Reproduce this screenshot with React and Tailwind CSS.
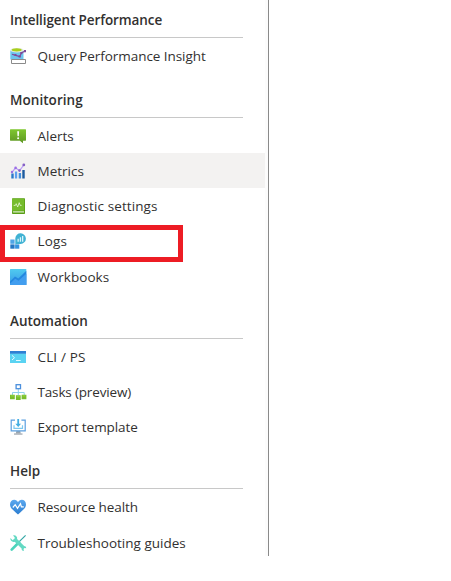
import React from "react";

const Svg = ({ children }) => (
  <svg className="block h-4 w-4 shrink-0 overflow-visible" viewBox="0 0 16 16" fill="none">
    {children}
  </svg>
);

const QueryIcon = () => (
  <Svg>
    <path d="M.3 2.500v9h13.200v-9z" fill="#6cc5ee" />
    <ellipse cx="7" cy="2.200" rx="6.700" ry="2.300" fill="#e3ecdf" />
    <ellipse cx="6.700" cy="1.800" rx="5" ry="1.600" fill="#a9cf1c" />
    <path d="M2 6.200l3.700 1.200 4 1.100 1.800-3.500 3.500-2" stroke="#804998" strokeWidth="1.200" />
    <path d="M4.500 6h2v2h-2zM8.600 7.500h2.200v2H8.600zM10.300 4h2v2h-2zM14 2h2v2.200h-2z" fill="#804998" />
    <path d="M1.500 11.500h14v4h-14z" fill="#fff" stroke="#8b8b8b" />
  </Svg>
);

const AlertsIcon = () => (
  <Svg>
    <defs>
      <linearGradient id="alert" x1="0" y1="0" x2="0" y2="1">
        <stop stopColor="#7fc72f" />
        <stop offset="1" stopColor="#5e9624" />
      </linearGradient>
    </defs>
    <path d="M.5 1.200h15c.3 0 .5.2.5.5v10.600c0 .3-.2.5-.5.5H13v2.400l-3.200-2.400H.5c-.3 0-.5-.2-.5-.5V1.700c0-.3.2-.5.5-.5z" fill="url(#alert)" />
    <path d="M7.200 3.200h1.900l-.3 5H7.500z" fill="#fff" />
    <circle cx="8.150" cy="10.300" r="1" fill="#fff" />
  </Svg>
);

const MetricsIcon = () => (
  <Svg>
    <path d="M1.300 10.500h2.400v5H1.300z" fill="#2a78c9" />
    <path d="M4.900 8.500h2.300v7H4.900z" fill="#5ea0ef" />
    <path d="M8.700 10h2.400v5.500H8.700z" fill="#438fdc" />
    <path d="M12.300 7h2.400v8.500h-2.400z" fill="#1b5a9f" />
    <path d="M2 9.300l3.500-4.500 4 2.900 4.300-5.700" stroke="#b796f9" strokeWidth="1.100" />
    <circle cx="2" cy="9" r="1.200" fill="#9c6fe4" />
    <circle cx="5.600" cy="4.900" r="1.300" fill="#9c6fe4" />
    <circle cx="9.500" cy="7.600" r="1.300" fill="#8661c5" />
    <circle cx="13.800" cy="1.900" r="1.400" fill="#8661c5" />
  </Svg>
);

const DiagnosticIcon = () => (
  <Svg>
    <rect x="2" y=".2" width="13" height="15.700" rx=".7" fill="#5a9e16" />
    <path d="M2 .8h12.200v11.900H2z" fill="#76bc2d" />
    <path d="M3.400 13.200H14v1.300H3.400c-.9 0-.9-1.300 0-1.300z" fill="#d9eec5" />
    <path d="M3.700 7.400h1.700l.8-1.700L7.700 9l1.500-4.300 1 2.700h1.400" stroke="#e8f7d8" strokeWidth=".8" />
  </Svg>
);

const LogsIcon = () => (
  <Svg>
    <path d="M.3 6.500h4.300v4.300H.3z" fill="#50a5e6" />
    <path d="M.3 11.400h4.300v4.300H.3z" fill="#2476c3" />
    <path d="M5.100 11.400h4.200v4.300H5.100z" fill="#3592df" />
    <path d="M5.300 11.500V5.500a5.300 5.300 0 1 1 5.300 5.400H7.300z" fill="#40b2d3" />
    <path d="M7.500 5.800h1.300v3H7.500zM9.800 4.200h1.300v4.600H9.800zM12 2.900h1.300v5.900H12z" fill="#d8f5fc" />
  </Svg>
);

const WorkbooksIcon = () => (
  <Svg>
    <defs>
      <linearGradient id="book" x1="0" y1="0" x2="0" y2="1">
        <stop stopColor="#50cbf0" />
        <stop offset="1" stopColor="#3799e6" />
      </linearGradient>
    </defs>
    <rect width="16.300" height="16" rx=".5" fill="url(#book)" />
    <path d="M0 12.500l5-5 3.300 2 8-7.800V15.500a.5.5 0 0 1-.5.5H.5a.5.5 0 0 1-.5-.5z" fill="#2588df" />
    <path d="M0 14.700l5.200-4.900 3.300 2 7.800-7V15.500a.5.5 0 0 1-.5.500H.5a.5.5 0 0 1-.5-.5z" fill="#429eef" />
  </Svg>
);

const CliIcon = () => (
  <Svg>
    <path d="M0 4.200h16v9.800H0z" fill="#5ad3f2" />
    <path d="M0 2h16v2.700H0z" fill="#2e80d3" />
    <path d="M2 6.400l2.500 2.300L2 11" stroke="#e6faff" strokeWidth="1" />
    <path d="M6 11.500h4.700" stroke="#e6faff" strokeWidth="1" />
  </Svg>
);

const TasksIcon = () => (
  <Svg>
    <path d="M8.300 5v6M2.500 11V8.500h11.700V11" stroke="#8fd0ec" strokeWidth="1" />
    <rect x="6.100" y=".7" width="4.400" height="4" fill="#fff" stroke="#4a8fdd" strokeWidth="1.300" />
    <path d="M0 10.700h4.800v4.600H0zM5.900 11.300h4.800v4.600H5.900zM11.600 10.700h4.800v4.600h-4.800z" fill="#79bd2d" />
    <path d="M.9 11.200h3v1.400h-3zM6.800 11.800h3v1.400h-3zM12.500 11.200h3v1.400h-3z" fill="#8fd13b" />
  </Svg>
);

const ExportIcon = () => (
  <Svg>
    <path d="M6.400 12h3.800l.6 2.500H5.800z" fill="#9aa6b1" />
    <path d="M4 14.500h8.500v1.100H4z" fill="#929aa3" />
    <path d="M5 1.200H1.200v10.600h14V1.200h-3.800" stroke="#5a9fe0" strokeWidth="1.200" />
    <path d="M7.300.1h1.800v4.700h2L8.200 7.900 5.300 4.800h2z" fill="#43aee3" />
    <path d="M4 6.300v3h8.500v-3" stroke="#7cc8ee" strokeWidth="1.200" />
  </Svg>
);

const HealthIcon = () => (
  <Svg>
    <defs>
      <linearGradient id="heart" x1="0" y1="0" x2="0" y2="1">
        <stop stopColor="#5ba8ef" />
        <stop offset="1" stopColor="#2b7dd0" />
      </linearGradient>
    </defs>
    <path d="M8 15.500C3.700 11.700 0 9 0 5.400 0 2.700 2 .8 4.300.8 6 .8 7.300 1.700 8 3.200 8.700 1.700 10.100.8 11.800.8 14.100.8 16 2.700 16 5.400 16 9 12.300 11.700 8 15.500z" fill="url(#heart)" />
    <path d="M2.800 8.500l2.400-2.800 2.300 3.600 3-4.600.9 3.200h2.400" stroke="#fff" strokeWidth="1.200" />
  </Svg>
);

const ToolsIcon = () => (
  <Svg>
    <path d="M15.600.4L9 6.900" stroke="#32a7a5" strokeWidth="1.200" />
    <path d="M9 7.200L1.700 14.600" stroke="#4cd3bb" strokeWidth="2.700" strokeLinecap="round" />
    <path d="M.4 3.100L2.700 5.200 5 3.100 3.100.4c2.400-.7 4.600 1.300 4 3.700l7 7c1.200 0 2.100.9 2.100 2.200l-1.700-.4-1 1.200.6 1.700c-1.500.3-2.700-.9-2.500-2.300L4.700 6.800C2.300 7.700-.1 5.500.4 3.100z" fill="#63d9c3" />
  </Svg>
);

const sections = [
  {
    title: "Intelligent Performance",
    tracking: "tracking-[-0.1px]",
    height: "h-[37px]",
    items: [{ label: "Query Performance Insight", Icon: QueryIcon, tracking: "tracking-[-0.06px]" }],
  },
  {
    title: "Monitoring",
    tracking: "tracking-[0.05px]",
    height: "h-11",
    items: [
      { label: "Alerts", Icon: AlertsIcon },
      { label: "Metrics", Icon: MetricsIcon, active: true },
      { label: "Diagnostic settings", Icon: DiagnosticIcon, tracking: "tracking-[0.1px]" },
      { label: "Logs", Icon: LogsIcon, height: "h-9", highlighted: true, tracking: "tracking-[0.2px]" },
      { label: "Workbooks", Icon: WorkbooksIcon, tracking: "tracking-[0.05px]" },
    ],
  },
  {
    title: "Automation",
    height: "h-11",
    items: [
      { label: "CLI / PS", Icon: CliIcon, tracking: "tracking-[0.15px]" },
      { label: "Tasks (preview)", Icon: TasksIcon, tracking: "tracking-[-0.16px]" },
      { label: "Export template", Icon: ExportIcon, tracking: "tracking-[-0.06px]" },
    ],
  },
  {
    title: "Help",
    height: "h-11",
    items: [
      { label: "Resource health", Icon: HealthIcon, height: "h-9", tracking: "tracking-[-0.08px]" },
      { label: "Troubleshooting guides", Icon: ToolsIcon },
    ],
  },
];

function Item({ label, Icon, active, highlighted, height = "h-[35px]", tracking = "" }) {
  return (
    <li className={`relative flex items-center pl-[10px] ${height} ${active ? "bg-[#f3f2f1]" : ""}`}>
      <Icon />
      <span className={`ml-[11.5px] whitespace-nowrap ${tracking}`}>{label}</span>
      {highlighted && (
        <span className="absolute top-[2px] left-0 h-[37px] w-[183px] border-[5px] border-[#ed1c24]" />
      )}
    </li>
  );
}

export default function App() {
  return (
    <div className="h-[581px] w-[451px] overflow-hidden bg-white">
      <nav className="h-[556px] w-[269px] border-r border-[#8a8a8a] font-['Open_Sans','Noto_Sans',sans-serif] text-[13.5px] leading-5 text-[#323130]">
        <div className="h-full w-[268px] border-r-[3px] border-[#fcfcfc]">
          {sections.map(({ title, height, items, tracking = "" }) => (
            <section key={title}>
              <h2 className={`flex items-end pb-[7px] pl-[10px] font-semibold ${height} ${tracking}`}>{title}</h2>
              <div className="ml-[10px] h-px w-[233px] bg-[#c8c8c8]" />
              <ul>
                {items.map((item) => (
                  <Item key={item.label} {...item} />
                ))}
              </ul>
            </section>
          ))}
        </div>
      </nav>
    </div>
  );
}
